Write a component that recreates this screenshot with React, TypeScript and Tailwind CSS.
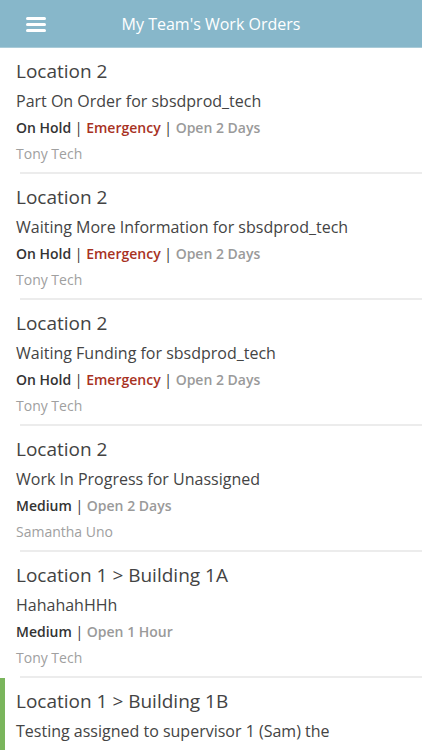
import React from "react";

type Order = {
  location: string;
  title: string;
  status?: string;
  priority: string;
  emergency?: boolean;
  open: string;
  person: string;
  active?: boolean;
};

const orders: Order[] = [
  { location: "Location 2", title: "Part On Order for sbsdprod_tech", status: "On Hold", priority: "Emergency", emergency: true, open: "Open 2 Days", person: "Tony Tech" },
  { location: "Location 2", title: "Waiting More Information for sbsdprod_tech", status: "On Hold", priority: "Emergency", emergency: true, open: "Open 2 Days", person: "Tony Tech" },
  { location: "Location 2", title: "Waiting Funding for sbsdprod_tech", status: "On Hold", priority: "Emergency", emergency: true, open: "Open 2 Days", person: "Tony Tech" },
  { location: "Location 2", title: "Work In Progress for Unassigned", priority: "Medium", open: "Open 2 Days", person: "Samantha Uno" },
  { location: "Location 1 > Building 1A", title: "HahahahHHh", priority: "Medium", open: "Open 1 Hour", person: "Tony Tech" },
  { location: "Location 1 > Building 1B", title: "Testing assigned to supervisor 1 (Sam) the supervisor is Ali", priority: "Medium", open: "Open 1 Hour", person: "Tony Tech", active: true },
];

function Row({ o }: { o: Order }) {
  return (
    <div className={`relative pl-4 ${o.active ? "before:absolute before:left-0 before:top-0 before:bottom-0 before:w-[5px] before:bg-[#7ab55c]" : ""}`}>
      <div className="pt-[10px] pb-[6px] pr-4">
        <div className="text-[19px] leading-[27px] font-medium text-[#434343]">{o.location}</div>
        <div className="text-[16px] leading-[26px] mt-[3px] text-[#444]">{o.title}</div>
        <div className="text-[14px] leading-[28px] font-semibold">
          {o.status && (
            <>
              <span className="text-[#333]">{o.status}</span>
              <span className="text-[#333] font-normal"> | </span>
            </>
          )}
          <span className={o.emergency ? "text-[#a8321f]" : "text-[#333]"}>{o.priority}</span>
          <span className="text-[#333] font-normal"> | </span>
          <span className="text-[#9a9a9a]">{o.open}</span>
        </div>
        <div className="text-[14px] leading-[24px] text-[#a0a0a0]">{o.person}</div>
      </div>
      <div className="ml-1 h-[2px] bg-[#ececec]" />
    </div>
  );
}

export default function App() {
  return (
    <div className="w-[422px] h-[750px] overflow-hidden bg-white" style={{ fontFamily: '"Open Sans", "Noto Sans", sans-serif' }}>
      <div className="h-[48px] bg-[#87b7ca] border-b border-[#a9cbd8] flex items-center relative">
        <div className="absolute left-[26px] top-[17px] flex flex-col gap-[3px]">
          <div className="w-[20px] h-[3px] rounded-full bg-white" />
          <div className="w-[20px] h-[3px] rounded-full bg-white" />
          <div className="w-[20px] h-[3px] rounded-full bg-white" />
        </div>
        <div className="w-full text-center text-white text-[16px]">My Team's Work Orders</div>
      </div>
      <div>
        {orders.map((o, i) => (
          <Row key={i} o={o} />
        ))}
      </div>
    </div>
  );
}
